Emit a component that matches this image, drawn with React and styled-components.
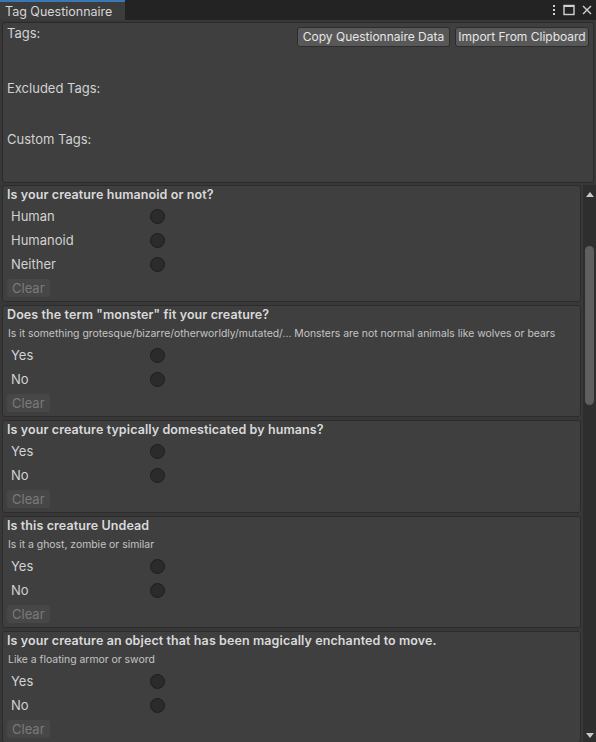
import React from 'react'
import styled, { createGlobalStyle } from 'styled-components'

const GlobalStyle = createGlobalStyle`
  html, body { margin: 0; padding: 0; background: #383838; }
  body { font-family: Inter, "Noto Sans", sans-serif; color: #d2d2d2; }
`

const questions = [
  {
    title: 'Is your creature humanoid or not?',
    options: ['Human', 'Humanoid', 'Neither'],
  },
  {
    title: 'Does the term "monster" fit your creature?',
    desc: 'Is it something grotesque/bizarre/otherworldly/mutated/... Monsters are not normal animals like wolves or bears',
    options: ['Yes', 'No'],
  },
  {
    title: 'Is your creature typically domesticated by humans?',
    options: ['Yes', 'No'],
  },
  {
    title: 'Is this creature Undead',
    desc: 'Is it a ghost, zombie or similar',
    options: ['Yes', 'No'],
  },
  {
    title: 'Is your creature an object that has been magically enchanted to move.',
    desc: 'Like a floating armor or sword',
    options: ['Yes', 'No'],
  },
]

//-------------------------------------------Window---------------------------------------
const Window = styled.div`
  width: 596px;
  height: 742px;
  display: flex;
  flex-direction: column;
  background: #383838;
  overflow: hidden;
`

const TabBar = styled.div`
  height: 20px;
  display: flex;
  align-items: stretch;
  background: #232323;
  flex-shrink: 0;
`

const Tab = styled.div`
  width: 125px;
  box-sizing: border-box;
  border-top: 2px solid #3a78b5;
  background: #3c3c3c;
  font-size: 12.5px;
  color: #d6d6d6;
  padding: 1px 0 0 5px;
  line-height: 17px;
`

const TabIcons = styled.div`
  margin-left: auto;
  display: flex;
  align-items: center;
  gap: 6px;
  padding-right: 3px;
`

//-------------------------------------------Tags panel---------------------------------------
const TagsPanel = styled.div`
  margin: 2px 2px 0 2px;
  height: 161px;
  box-sizing: border-box;
  border: 1px solid #2a2a2a;
  border-radius: 3px;
  background: #3f3f3f;
  display: flex;
  flex-direction: column;
  padding: 2px 4px 0 4px;
  flex-shrink: 0;
`

const TagRow = styled.div`
  display: flex;
  align-items: flex-start;
  height: ${p => p.$h}px;
`

const TagLabel = styled.div`
  font-size: 13px;
  color: #d2d2d2;
  line-height: 16px;
`

const ButtonGroup = styled.div`
  margin-left: auto;
  margin-top: 2px;
  display: flex;
  gap: 5px;
`

const Button = styled.button`
  font-family: Inter, "Noto Sans", sans-serif;
  font-size: 12px;
  height: 20px;
  padding: 0;
  box-sizing: border-box;
  white-space: nowrap;
  border: 1px solid #2d2d2d;
  border-radius: 3px;
  background: #585858;
  color: #e6e6e6;
  line-height: 18px;
  width: ${p => p.$w}px;
`

//-------------------------------------------Questions---------------------------------------
const ScrollArea = styled.div`
  flex: 1;
  display: flex;
  min-height: 0;
  margin-top: 2px;
`

const QuestionList = styled.div`
  flex: 1;
  display: flex;
  flex-direction: column;
  gap: 3px;
  padding-left: 2px;
  overflow: hidden;
`

const Card = styled.div`
  border: 1px solid #2c2c2c;
  border-radius: 3px;
  background: #3f3f3f;
  padding: 1px 4px 4px 4px;
  flex-shrink: 0;
`

const Title = styled.div`
  font-size: 12.5px;
  font-weight: 600;
  color: #dadada;
  line-height: 16px;
  letter-spacing: 0.1px;
`

const Desc = styled.div`
  font-size: 10.4px;
  color: #c4c4c4;
  line-height: 14px;
  margin-top: 4px;
  padding-left: 1px;
  white-space: nowrap;
`

const Options = styled.div`
  display: flex;
  flex-direction: column;
  margin-top: ${p => (p.$desc ? 2 : 1)}px;
`

const OptionRow = styled.div`
  display: flex;
  align-items: center;
  height: 24px;
`

const OptionLabel = styled.div`
  width: 143px;
  box-sizing: border-box;
  padding-left: 4px;
  font-size: 13px;
  color: #d2d2d2;
`

const Radio = styled.div`
  width: 13px;
  height: 13px;
  border-radius: 50%;
  background: #2b2b2b;
  border: 1px solid #1e1e1e;
`

const ClearButton = styled.div`
  margin-top: 3px;
  width: 43px;
  height: 18px;
  border-radius: 3px;
  background: #474747;
  color: #7a7a7a;
  font-size: 13px;
  line-height: 18px;
  padding-left: 5px;
  box-sizing: border-box;
`

//-------------------------------------------Scrollbar---------------------------------------
const Scrollbar = styled.div`
  width: 13px;
  margin-left: 2px;
  background: #2e2e2e;
  display: flex;
  flex-direction: column;
  align-items: center;
`

const Arrow = styled.div`
  height: 14px;
  display: flex;
  align-items: center;
  justify-content: center;
  margin-top: ${p => p.$top || 0}px;
`

const Track = styled.div`
  flex: 1;
  width: 100%;
  display: flex;
  justify-content: center;
`

const Thumb = styled.div`
  margin-top: 45px;
  width: 9px;
  height: 159px;
  border-radius: 5px;
  background: #5f5f5f;
`

function Question({ q }) {
  return (
    <Card>
      <Title>{q.title}</Title>
      {q.desc && <Desc>{q.desc}</Desc>}
      <Options $desc={!!q.desc}>
        {q.options.map(o => (
          <OptionRow key={o}>
            <OptionLabel>{o}</OptionLabel>
            <Radio />
          </OptionRow>
        ))}
      </Options>
      <ClearButton>Clear</ClearButton>
    </Card>
  )
}

export default function App() {
  return (
    <Window>
      <GlobalStyle />
      <TabBar>
        <Tab>Tag Questionnaire</Tab>
        <TabIcons>
          <svg width="6" height="12" viewBox="0 0 6 12">
            <rect x="2" y="1" width="2" height="2" fill="#d0d0d0" />
            <rect x="2" y="5" width="2" height="2" fill="#d0d0d0" />
            <rect x="2" y="9" width="2" height="2" fill="#d0d0d0" />
          </svg>
          <svg width="12" height="12" viewBox="0 0 12 12">
            <rect x="1" y="1.5" width="10" height="9" fill="none" stroke="#d0d0d0" strokeWidth="1.4" />
            <rect x="1" y="1" width="10" height="2" fill="#d0d0d0" />
          </svg>
          <svg width="12" height="12" viewBox="0 0 12 12">
            <path d="M2 2 L10 10 M10 2 L2 10" stroke="#d0d0d0" strokeWidth="1.4" />
          </svg>
        </TabIcons>
      </TabBar>

      <TagsPanel>
        <TagRow $h={55}>
          <TagLabel>Tags:</TagLabel>
          <ButtonGroup>
            <Button $w={153}>Copy Questionnaire Data</Button>
            <Button $w={134}>Import From Clipboard</Button>
          </ButtonGroup>
        </TagRow>
        <TagRow $h={51}>
          <TagLabel>Excluded Tags:</TagLabel>
        </TagRow>
        <TagRow $h={40}>
          <TagLabel>Custom Tags:</TagLabel>
        </TagRow>
      </TagsPanel>

      <ScrollArea>
        <QuestionList>
          {questions.map(q => (
            <Question key={q.title} q={q} />
          ))}
        </QuestionList>
        <Scrollbar>
          <Arrow $top={2}>
            <svg width="8" height="5" viewBox="0 0 8 5">
              <path d="M0 5 L4 0 L8 5 Z" fill="#c8c8c8" />
            </svg>
          </Arrow>
          <Track>
            <Thumb />
          </Track>
          <Arrow>
            <svg width="8" height="5" viewBox="0 0 8 5">
              <path d="M0 0 L4 5 L8 0 Z" fill="#c8c8c8" />
            </svg>
          </Arrow>
        </Scrollbar>
      </ScrollArea>
    </Window>
  )
}
